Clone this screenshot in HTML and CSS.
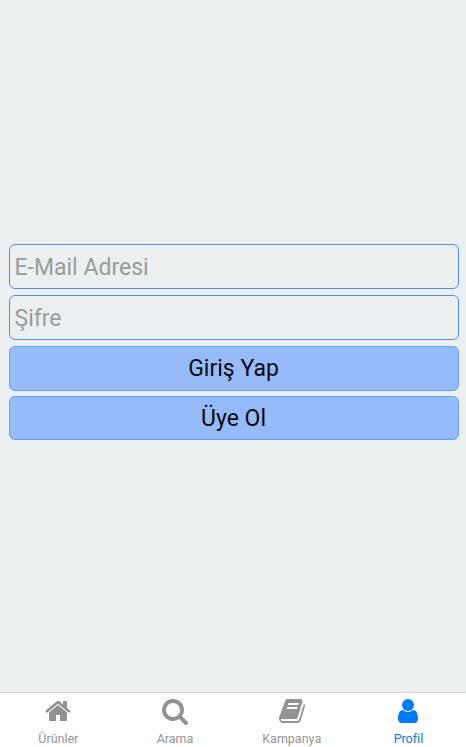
FILE: index.html
```html
<!DOCTYPE html>
<html lang="tr">
<head>
<meta charset="utf-8">
<title>Profil</title>
<link rel="stylesheet" href="styles.css">
</head>
<body>
<main class="login">
  <input class="field" type="email" placeholder="E-Mail Adresi">
  <input class="field field-password" type="password" placeholder="Şifre">
  <button class="button">Giriş Yap</button>
  <button class="button button-signup">Üye Ol</button>
</main>
<nav class="tabs">
  <a class="tab">
    <svg class="icon" viewBox="0 0 1792 1792"><path d="M1472 992v480q0 26-19 45t-45 19h-384v-384h-256v384h-384q-26 0-45-19t-19-45v-480q0-1 .5-3t.5-3l575-474 575 474q1 2 1 6zm223-69l-62 74q-8 9-21 11h-3q-13 0-21-7l-692-577-692 577q-12 8-24 7-13-2-21-11l-62-74q-8-10-7-23.5t11-21.5l719-599q32-26 76-26t76 26l244 204v-195q0-14 9-23t23-9h192q14 0 23 9t9 23v408l219 182q10 8 11 21.5t-7 23.5z"/></svg>
    <span>Ürünler</span>
  </a>
  <a class="tab">
    <svg class="icon" viewBox="0 0 1792 1792"><path d="M1216 832q0-185-131.500-316.500t-316.500-131.500-316.500 131.500-131.500 316.500 131.500 316.500 316.500 131.500 316.500-131.500 131.500-316.500zm512 832q0 52-38 90t-90 38q-54 0-90-38l-343-342q-179 124-399 124-143 0-273.500-55.500t-225-150-150-225-55.500-273.500 55.500-273.500 150-225 225-150 273.500-55.500 273.500 55.500 225 150 150 225 55.500 273.500q0 220-124 399l343 343q37 37 37 90z"/></svg>
    <span>Arama</span>
  </a>
  <a class="tab">
    <svg class="icon" viewBox="0 0 1792 1792"><path d="M1703 478q40 57 18 129l-275 906q-19 64-76.500 107.500t-122.500 43.500h-923q-77 0-148.500-53.500t-99.500-131.500q-24-67-2-127 0-4 3-27t4-37q1-8-3-21.500t-3-19.500q2-11 8-21t16.500-23.500 16.500-23.500q23-38 45-91.500t30-91.500q3-10 .5-30t-.5-28q3-11 17-28t17-23q21-36 42-92t25-90q1-9-2.500-32t.5-28q4-13 22-30.500t22-22.500q19-26 42.500-84.500t27.500-96.500q1-8-3-25.500t-2-26.500q2-8 9-18t18-23 17-21q8-12 16.500-30.500t15-35 16-36 19.500-32 26.500-23.500 36-11.500 47.500 5.500l-1 3q38-9 51-9h761q74 0 114 56t18 130l-274 906q-36 119-71.500 153.500t-128.500 34.500h-869q-27 0-38 15-11 16-1 43 24 70 144 70h923q29 0 56-15.500t35-41.500l300-987q7-22 5-57 38 15 59 43zm-1064 2q-4 13 2 22.500t20 9.500h608q13 0 25.500-9.500t16.500-22.500l21-64q4-13-2-22.500t-20-9.500h-608q-13 0-25.500 9.500t-16.500 22.500zm-83 256q-4 13 2 22.500t20 9.500h608q13 0 25.500-9.500t16.500-22.500l21-64q4-13-2-22.500t-20-9.500h-608q-13 0-25.500 9.500t-16.500 22.500z"/></svg>
    <span>Kampanya</span>
  </a>
  <a class="tab tab-active">
    <svg class="icon" viewBox="0 0 1792 1792"><path d="M1536 1399q0 109-62.500 187t-150.500 78h-854q-88 0-150.500-78t-62.500-187q0-85 8.500-160.500t31.500-152 58.500-131 94-89 134.500-34.500q131 128 313 128t313-128q76 0 134.500 34.500t94 89 58.500 131 31.500 152 8.500 160.500zm-256-887q0 159-112.500 271.500t-271.500 112.500-271.500-112.500-112.500-271.500 112.500-271.500 271.500-112.500 271.500 112.500 112.500 271.500z"/></svg>
    <span>Profil</span>
  </a>
</nav>
</body>
</html>
```
FILE: styles.css
```css
* {
  box-sizing: border-box;
}

body {
  display: flex;
  flex-direction: column;
  height: 747px;
  margin: 0;
  overflow: hidden;
  background: #ebeff0;
  font-family: Roboto, sans-serif;
}

.login {
  display: flex;
  flex: 1;
  flex-direction: column;
  padding: 244px 7.500px 0 8.500px;
}

.field,
.button {
  width: 100%;
  height: 45px;
  margin: 0 0 6px;
  border: 1px solid #4c8ffb;
  border-radius: 6px;
  font: 23px/28px Roboto, sans-serif;
}

.field {
  padding: 2px 5px 0;
  background: transparent;
  outline: none;
}

.field::placeholder {
  color: #999c9d;
  opacity: 1;
}

.button {
  padding: 0;
  background: #96bbfb;
  border-color: #699ffa;
  color: #080a0e;
}

.button-signup {
  height: 44px;
  margin-top: -1px;
  padding-top: 1px;
}

.tabs {
  display: flex;
  height: 55px;
  border-top: 1px solid #d2d4d4;
  background: #fff;
}

.tab {
  display: flex;
  flex: 0 0 116.700px;
  flex-direction: column;
  align-items: center;
  padding-top: 4px;
  color: #929296;
  font-size: 12.500px;
  line-height: 16px;
}

.tab span {
  margin-top: 6px;
}

.tab-active {
  color: #007aff;
}

.icon {
  width: 28px;
  height: 28px;
  fill: currentColor;
  overflow: visible;
}
```
